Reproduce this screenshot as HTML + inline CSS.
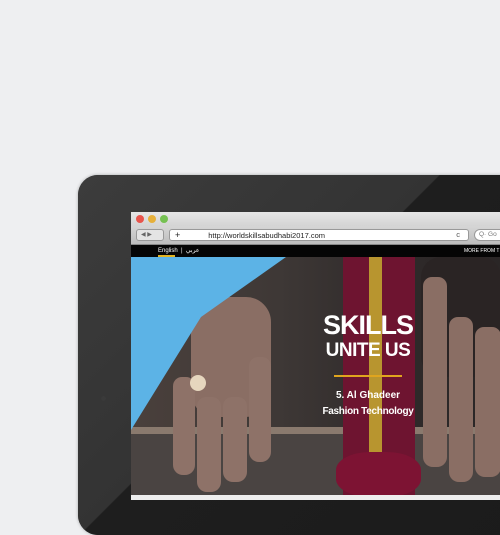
<!DOCTYPE html>
<html><head><style>
*{margin:0;padding:0;box-sizing:border-box}
body{width:500px;height:500px;background:#eeeff1;position:relative;overflow:hidden;font-family:"Liberation Sans",sans-serif}
.dev{position:absolute;left:78px;top:175px;width:460px;height:360px;border-radius:20px;background:#1c1c1c;overflow:hidden;box-shadow:0 0 3px rgba(0,0,0,.3)}
.refl{position:absolute;left:0;top:0;width:100%;height:100%;background:linear-gradient(135deg,#3c3c3c 0%,#333 44%,#1e1e1e 44.2%,#1b1b1b 100%)}
.screen{position:absolute;left:131px;top:212px;width:369px;height:288px;background:#fff;overflow:hidden}
.title{height:14px;background:linear-gradient(#e6e6e6,#d4d4d4);position:relative}
.dot{position:absolute;top:3px;width:8px;height:8px;border-radius:50%}
.tool{height:19px;background:linear-gradient(#d6d6d6,#bdbdbd);position:relative;border-bottom:1px solid #888}
.nav{height:12px;background:#050505;position:relative;color:#fff;font-size:6px}
.hero{position:absolute;top:45px;left:0;width:369px;height:238px;background:#3b3431;overflow:hidden}
.f{position:absolute;border-radius:9px 9px 10px 10px;background:#8e7268}
</style></head><body>
<div class="dev"><div class="refl"></div></div>
<div style="position:absolute;left:101px;top:396px;width:5px;height:5px;border-radius:50%;background:#3a3a3a"></div>
<div class="screen">
 <div class="title">
  <div class="dot" style="left:5px;background:#e8544c"></div>
  <div class="dot" style="left:17px;background:#e6b03a"></div>
  <div class="dot" style="left:29px;background:#76c152"></div>
 </div>
 <div class="tool">
  <div style="position:absolute;left:5px;top:3px;width:28px;height:12px;border-radius:3px;background:#e4e4e4;border:1px solid #999;font-size:6px;color:#666;line-height:10px;padding-left:4px">◀ ▶</div>
  <div style="position:absolute;left:38px;top:3px;width:300px;height:12px;border-radius:3px;background:#fff;border:1px solid #999;font-size:7.5px;line-height:10px;color:#222"><span style="margin-left:5px;font-size:9px">+</span><span style="margin-left:28px">http://worldskillsabudhabi2017.com</span><span style="position:absolute;right:8px;color:#555">c</span></div>
  <div style="position:absolute;left:343px;top:3px;width:40px;height:12px;border-radius:6px;background:#fff;border:1px solid #999;font-size:6.5px;line-height:10px;padding-left:4px;color:#777">Q· Go</div>
 </div>
 <div class="nav">
  <span style="position:absolute;left:27px;top:2px">English &nbsp;| &nbsp;عربي</span>
  <div style="position:absolute;left:27px;top:10px;width:17px;height:2px;background:#e3b420"></div>
  <span style="position:absolute;left:333px;top:3px;font-size:5px">MORE FROM T</span>
 </div>
 <div class="hero">
  <div style="position:absolute;left:0;top:0;width:369px;height:238px;background:linear-gradient(90deg,#4a403c,#3e3836 40%,#2f2a2a 70%,#2a2626)"></div>
  <div style="position:absolute;left:0;top:175px;width:369px;height:63px;background:#4a4442"></div>
  <div style="position:absolute;left:0;top:170px;width:369px;height:7px;background:#8a7a6e"></div>
  <div style="position:absolute;left:212px;top:0;width:72px;height:238px;background:#6e1430"></div>
  <div style="position:absolute;left:238px;top:0;width:13px;height:238px;background:#b8952f"></div>
  <div style="position:absolute;left:205px;top:195px;width:85px;height:45px;border-radius:40%;background:#7d1333"></div>
  <div style="position:absolute;left:60px;top:40px;width:80px;height:120px;border-radius:25px;background:#8a6e64"></div>
  <div class="f" style="left:42px;top:120px;width:22px;height:98px"></div>
  <div class="f" style="left:66px;top:140px;width:24px;height:95px"></div>
  <div class="f" style="left:92px;top:140px;width:24px;height:85px"></div>
  <div class="f" style="left:118px;top:100px;width:22px;height:105px"></div>
  <div style="position:absolute;left:59px;top:118px;width:16px;height:16px;border-radius:50%;background:#e6d6be"></div>
  <div style="position:absolute;left:290px;top:0;width:80px;height:120px;border-radius:20px;background:#2a2424"></div>
  <div class="f" style="left:292px;top:20px;width:24px;height:190px;background:#8a6e64"></div>
  <div class="f" style="left:318px;top:60px;width:24px;height:165px;background:#8a6e64"></div>
  <div class="f" style="left:344px;top:70px;width:26px;height:150px;background:#8a6e64"></div>
  <svg style="position:absolute;left:0;top:0" width="369" height="238"><polygon points="0,0 155,0 70,60 0,173" fill="#5cb3e6"/></svg>
  <div style="position:absolute;left:137px;top:54px;width:200px;text-align:center;color:#fff;font-weight:bold">
   <div style="font-size:27px;line-height:29px;letter-spacing:-1px">SKILLS</div>
   <div style="font-size:19px;line-height:22px;letter-spacing:-.5px">UNITE US</div>
   <div style="width:68px;height:2px;background:#e0a51e;margin:13px auto 10px"></div>
   <div style="font-size:10px;line-height:17px">5. Al Ghadeer</div>
   <div style="font-size:10px;line-height:16px;letter-spacing:-.3px">Fashion Technology</div>
  </div>
 </div>
 <div style="position:absolute;top:283px;left:0;width:369px;height:5px;background:#eee"></div>
</div>
</body></html>
